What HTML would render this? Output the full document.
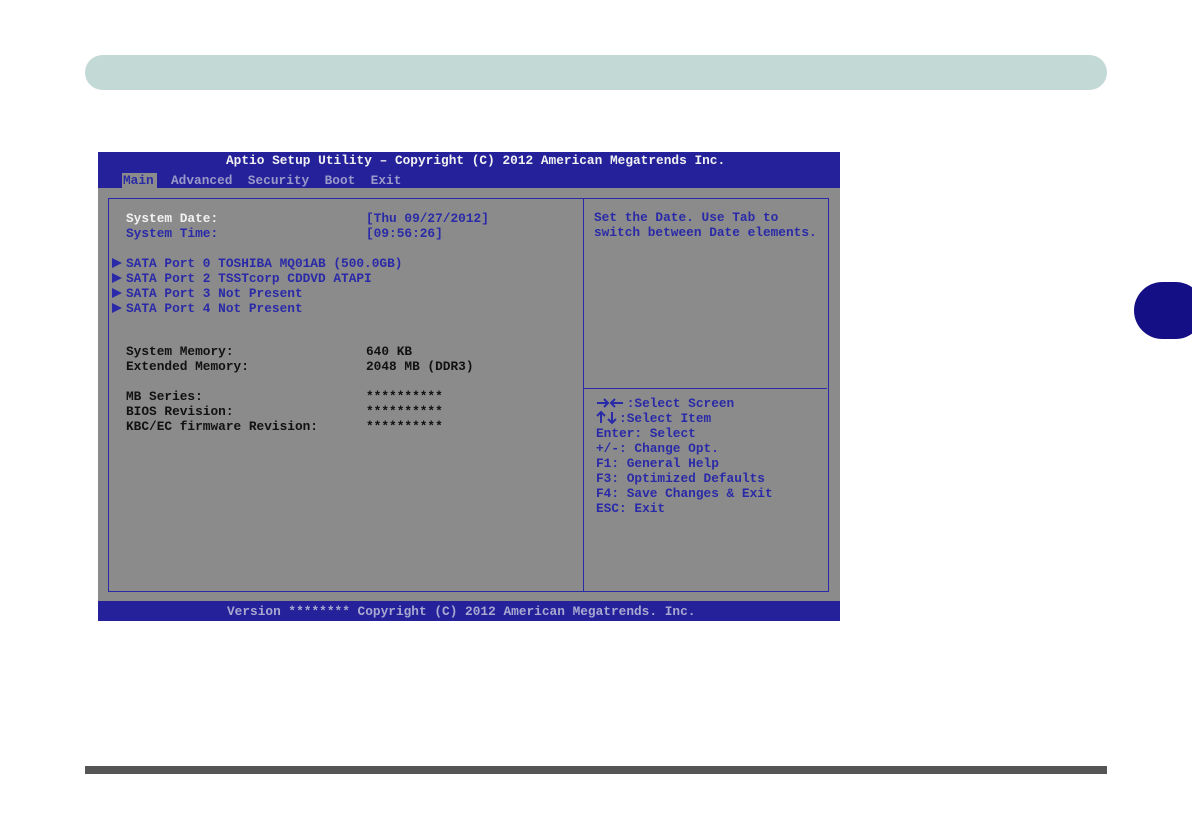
<!DOCTYPE html>
<html><head><meta charset="utf-8"><style>
body{margin:0;width:1192px;height:838px;background:#fff;position:relative;overflow:hidden;font-family:"Liberation Mono",monospace;}
.a{position:absolute}
.t{position:absolute;font-size:12.8px;white-space:pre;line-height:15px;font-weight:bold;}
.b{color:#2a2aa8}.w{color:#f2f2f2}.k{color:#111}
</style></head><body>
<div class="a" style="left:85px;top:55px;width:1022px;height:35px;background:#c3d9d5;border-radius:18px"></div>
<div class="a" style="left:1134px;top:282px;width:70px;height:57px;background:#150f85;border-radius:29px"></div>
<div class="a" style="left:85px;top:766px;width:1022px;height:8px;background:#555"></div>

<div class="a" style="left:98px;top:152px;width:742px;height:469px;background:#8b8b8b"></div>
<div class="a" style="left:98px;top:152px;width:742px;height:36px;background:#24219a"></div>
<div class="a" style="left:98px;top:601px;width:742px;height:20px;background:#24219a"></div>
<div class="a" style="left:108px;top:198px;width:719px;height:392px;border:1px solid #2a2aa8"></div>
<div class="a" style="left:583px;top:198px;width:1px;height:393px;background:#2a2aa8"></div>
<div class="a" style="left:583px;top:388px;width:244px;height:1px;background:#2a2aa8"></div>
<div class="a" style="left:122px;top:173px;width:35px;height:15px;background:#8b8b8b"></div>

<div class="t w" style="left:226px;top:153px">Aptio Setup Utility – Copyright (C) 2012 American Megatrends Inc.</div>
<div class="t" style="left:123px;top:173px;color:#2a2aa8">Main</div>
<div class="t" style="left:171px;top:173px;color:#9a9ac8">Advanced  Security  Boot  Exit</div>

<div class="t w" style="left:126px;top:211px">System Date:</div>
<div class="t b" style="left:126px;top:226px">System Time:</div>
<div class="t b" style="left:366px;top:211px">[Thu 09/27/2012]</div>
<div class="t b" style="left:366px;top:226px">[09:56:26]</div>
<svg class="a" style="left:112px;top:256px" width="12" height="60"><g fill="#2a2aa8"><path d="M0 2L10 7L0 12Z"/><path d="M0 17L10 22L0 27Z"/><path d="M0 32L10 37L0 42Z"/><path d="M0 47L10 52L0 57Z"/></g></svg>
<div class="t b" style="left:126px;top:256px">SATA Port 0 TOSHIBA MQ01AB (500.0GB)
SATA Port 2 TSSTcorp CDDVD ATAPI
SATA Port 3 Not Present
SATA Port 4 Not Present</div>
<div class="t k" style="left:126px;top:344px">System Memory:
Extended Memory:

MB Series:
BIOS Revision:
KBC/EC firmware Revision:</div>
<div class="t k" style="left:366px;top:344px">640 KB
2048 MB (DDR3)

**********
**********
**********</div>
<div class="t b" style="left:594px;top:210px">Set the Date. Use Tab to
switch between Date elements.</div>
<svg class="a" style="left:596px;top:396px" width="32" height="32"><g stroke="#2a2aa8" stroke-width="2" fill="none"><path d="M1 7H12M8 3L12 7L8 11"/><path d="M27 7H15M19 3L15 7L19 11"/><path d="M5 27V16M1 20L5 16L9 20"/><path d="M16 16V27M12 23L16 27L20 23"/></g></svg>
<div class="t b" style="left:596px;top:396px">    :Select Screen
   :Select Item
Enter: Select
+/-: Change Opt.
F1: General Help
F3: Optimized Defaults
F4: Save Changes &amp; Exit
ESC: Exit</div>
<div class="t" style="left:227px;top:604px;color:#a8a8d0">Version ******** Copyright (C) 2012 American Megatrends. Inc.</div>
</body></html>
